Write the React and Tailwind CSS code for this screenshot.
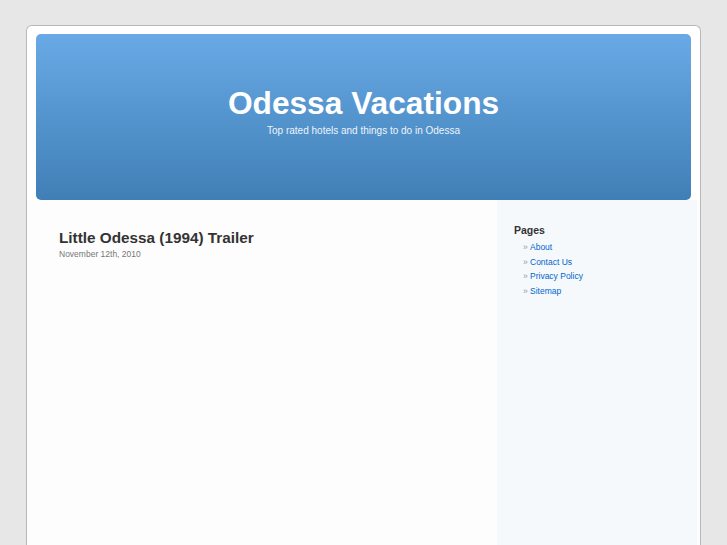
export default function App() {
  const pages = ["About", "Contact Us", "Privacy Policy", "Sitemap"];
  return (
    <div className="min-h-screen bg-[#e7e7e7] pt-[25px] overflow-hidden" style={{ fontFamily: '"Liberation Sans", Arial, sans-serif' }}>
      <div className="ml-[26px] w-[675px] h-[530px] border border-b-0 border-[#b8b8b8] rounded-t-[6px] bg-[#fdfdfd] flex flex-col">
        <div className="px-[9px] pt-[8px] bg-white rounded-t-[6px]">
          <div className="h-[166px] rounded-[5px] bg-gradient-to-b from-[#69aae6] to-[#407fb6] flex flex-col items-center">
            <h1 className="mt-[50px] text-[31.7px] leading-[38px] font-bold text-white">Odessa Vacations</h1>
            <p className="mt-[2px] text-[10px] leading-[14px] text-[#eef4fb]">Top rated hotels and things to do in Odessa</p>
          </div>
        </div>
        <div className="flex flex-1">
          <div className="w-[470px] pl-[32px] pt-[29px]">
            <h2 className="text-[15.3px] leading-[18px] font-bold text-[#333]">Little Odessa (1994) Trailer</h2>
            <p className="mt-[1px] text-[8.5px] leading-[12px] text-[#777]">November 12th, 2010</p>
          </div>
          <div className="w-[200px] bg-[#f6f9fc] pl-[17px] pt-[23px]">
            <h3 className="text-[10.5px] leading-[14px] font-bold text-[#333]">Pages</h3>
            <ul className="mt-[3px] pl-[9px]">
              {pages.map((p) => (
                <li key={p} className="text-[8.5px] leading-[14.5px] flex">
                  <span className="text-[#999] w-[7px]">»</span>
                  <span className="text-[#0066cc]">{p}</span>
                </li>
              ))}
            </ul>
          </div>
        </div>
      </div>
    </div>
  );
}
